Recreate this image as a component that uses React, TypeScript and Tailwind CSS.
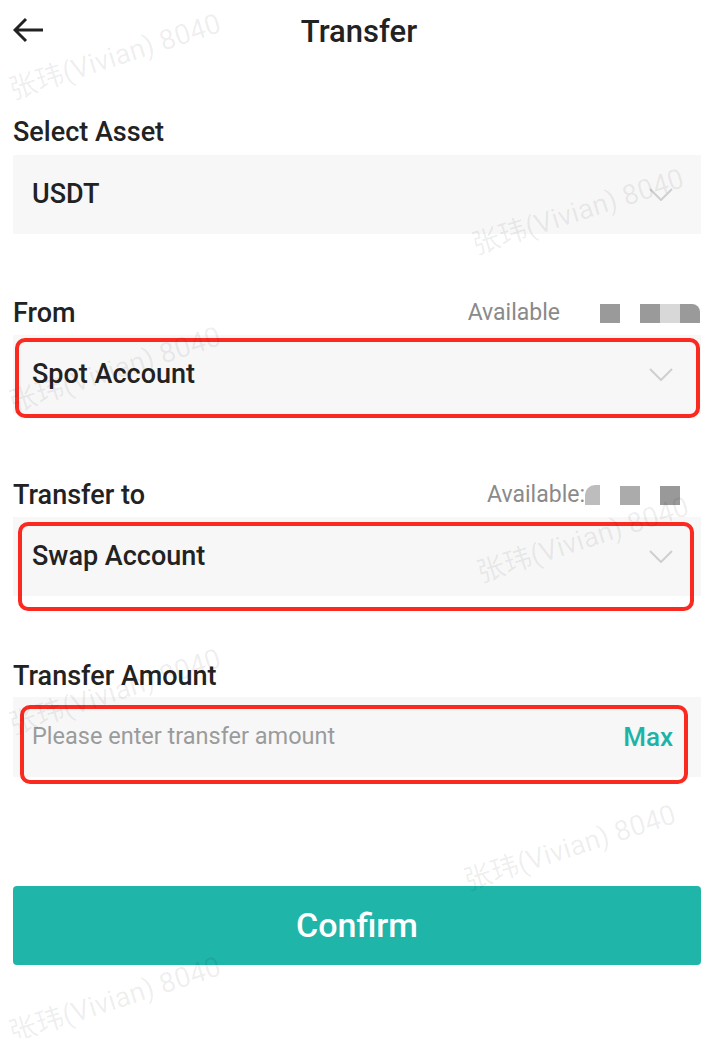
import React from 'react';

const marks = [
  { left: 'left-[115px]', top: 'top-[57px]' },
  { left: 'left-[115px]', top: 'top-[370px]' },
  { left: 'left-[115px]', top: 'top-[692px]' },
  { left: 'left-[115px]', top: 'top-[1000px]' },
  { left: 'left-[578px]', top: 'top-[212px]' },
  { left: 'left-[583px]', top: 'top-[540px]' },
  { left: 'left-[570px]', top: 'top-[848px]' },
];

function Chevron() {
  return (
    <svg width="24" height="13" viewBox="0 0 24 13" fill="none" className="mr-[28px]">
      <path d="M1 1l11 11L23 1" stroke="#cfcfcf" strokeWidth="2" />
    </svg>
  );
}

export default function App() {
  return (
    <div className="relative w-[718px] h-[1038px] overflow-hidden bg-white text-[#222] font-['Roboto','Noto_Sans_CJK_SC',sans-serif]">
      {/* header */}
      <div className="relative h-[64px] flex items-center justify-center">
        <svg width="32" height="26" viewBox="0 0 32 26" fill="none" className="absolute left-[13px] top-[17px]">
          <path d="M30 13H3M13 2L2 13l11 11" stroke="#222" strokeWidth="3" />
        </svg>
        <span className="text-[31px] font-medium">Transfer</span>
      </div>

      <div className="pl-[13px] pr-[17px]">
        {/* asset */}
        <div className="mt-[48px] h-[40px] flex items-center text-[27px] font-medium">Select Asset</div>
        <div className="mt-[3px] h-[79px] bg-[#f7f7f7] flex items-center justify-between">
          <span className="pl-[19px] text-[27px] font-medium">USDT</span>
          <Chevron />
        </div>

        {/* from */}
        <div className="mt-[59px] h-[40px] flex items-center justify-between">
          <span className="text-[27px] font-medium">From</span>
          <div className="flex items-center">
            <span className="text-[23px] text-[#8a8a8a] mr-[40px]">Available</span>
            <div className="w-[20px] h-[19px] bg-[#9a9a9a] mr-[20px]" />
            <div className="w-[20px] h-[19px] bg-[#9a9a9a]" />
            <div className="w-[20px] h-[19px] bg-[#d8d8d8]" />
            <div className="w-[20px] h-[19px] bg-[#9a9a9a] rounded-tr-[8px] mr-[1px]" />
          </div>
        </div>
        <div className="relative mt-[2px] h-[79px] bg-[#f7f7f7] flex items-center justify-between">
          <span className="pl-[19px] text-[27px] font-medium">Spot Account</span>
          <Chevron />
          <div className="absolute left-[2px] top-[3px] right-[1px] bottom-[-4px] border-[4px] border-[#fb2a20] rounded-[10px]" />
        </div>

        {/* to */}
        <div className="mt-[61px] h-[40px] flex items-center justify-between">
          <span className="text-[27px] font-medium">Transfer to</span>
          <div className="flex items-center">
            <span className="text-[23px] text-[#8a8a8a]">Available:</span>
            <div className="w-[15px] h-[20px] bg-[#bdbdbd] rounded-tl-[10px] mr-[20px]" />
            <div className="w-[20px] h-[19px] bg-[#ababab] mr-[20px]" />
            <div className="w-[20px] h-[19px] bg-[#999] mr-[21px]" />
          </div>
        </div>
        <div className="relative mt-[2px] h-[79px] bg-[#f7f7f7] flex items-center justify-between">
          <span className="pl-[19px] text-[27px] font-medium">Swap Account</span>
          <Chevron />
          <div className="absolute left-[5px] top-[5px] right-[7px] bottom-[-15px] border-[4px] border-[#fb2a20] rounded-[10px]" />
        </div>

        {/* amount */}
        <div className="mt-[60px] h-[40px] flex items-center text-[27px] font-medium">Transfer Amount</div>
        <div className="relative mt-[1px] h-[80px] bg-[#f7f7f7] flex items-center justify-between">
          <span className="pl-[19px] text-[23.5px] text-[#9b9b9b]">Please enter transfer amount</span>
          <span className="pr-[28px] text-[26px] font-medium text-[#1cb4a7]">Max</span>
          <div className="absolute left-[7px] top-[8px] right-[13px] bottom-[-7px] border-[4px] border-[#fb2a20] rounded-[10px]" />
        </div>

        <button className="mt-[109px] w-full h-[79px] rounded-[4px] bg-[#1fb5a9] text-white text-[34px] font-medium">
          Confirm
        </button>
      </div>

      {/* watermark */}
      <div className="pointer-events-none absolute inset-0">
        {marks.map((m, i) => (
          <span
            key={i}
            className={`absolute ${m.left} ${m.top} -translate-x-1/2 -translate-y-1/2 -rotate-[18deg] whitespace-nowrap text-[28px] text-black/[0.07]`}
          >
            张玮(Vivian) 8040
          </span>
        ))}
      </div>
    </div>
  );
}
